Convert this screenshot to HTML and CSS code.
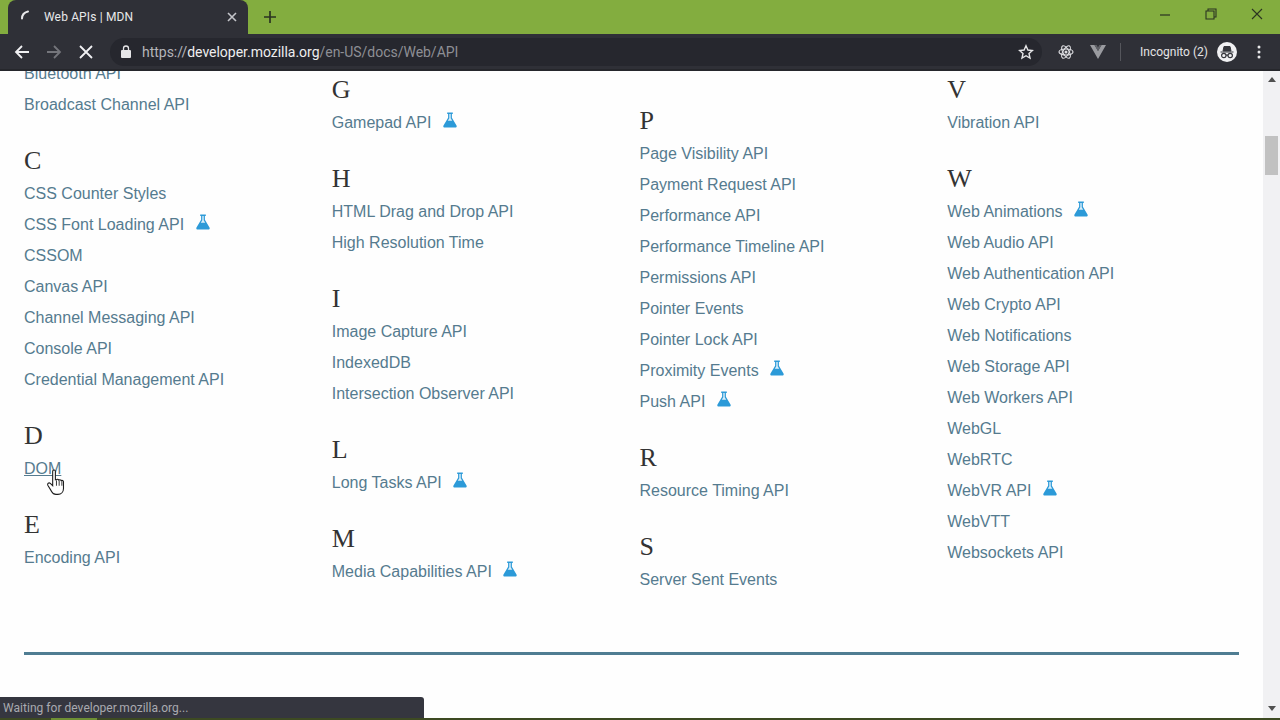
FILE: index.html
```html
<!DOCTYPE html>
<html lang="en">
<head>
    <meta charset="UTF-8">
    <meta name="viewport" content="width=device-width, initial-scale=1.0">
    <title>Web APIs | MDN</title>
    <link rel="stylesheet" href="styles.css">
</head>
<body>
    <svg class="defs" width="0" height="0">
        <symbol id="flask" viewBox="0 0 14 16">
            <path d="M4.200 0.500h5.600v1.400h-0.900v3.900l4.600 7.600c0.600 1 0 2.100-1.100 2.100H1.600c-1.100 0-1.700-1.100-1.100-2.100l4.600-7.600V1.900H4.200z" fill="#2c9ad8"/>
            <path d="M6.300 2h1.400v4.200l1.500 2.600H4.800l1.500-2.600z" fill="#d9eef9"/>
        </symbol>
    </svg>

    <div class="tabbar">
        <div class="tab">
            <svg class="spinner" width="16" height="16" viewBox="0 0 16 16"><path d="M3 9.500C3 6 5 3.500 9 2.500" fill="none" stroke="#e8e8ea" stroke-width="2" stroke-linecap="round"/></svg>
            <span class="tab-title">Web APIs | MDN</span>
            <svg class="tab-close" width="10" height="10" viewBox="0 0 10 10"><path d="M1 1l8 8M9 1l-8 8" stroke="#c4c5ca" stroke-width="1.600"/></svg>
        </div>
        <svg class="new-tab" width="14" height="14" viewBox="0 0 14 14"><path d="M7 1v12M1 7h12" stroke="#2b3322" stroke-width="1.700"/></svg>
        <div class="window-btns">
            <svg width="12" height="12" viewBox="0 0 12 12"><path d="M1 7h10" stroke="#2b3322" stroke-width="1.200"/></svg>
            <svg width="12" height="12" viewBox="0 0 12 12"><path d="M3 3V1h8v8H9M1 3h8v8H1z" fill="none" stroke="#2b3322" stroke-width="1.100"/></svg>
            <svg width="12" height="12" viewBox="0 0 12 12"><path d="M1 1l10 10M11 1L1 11" stroke="#2b3322" stroke-width="1.100"/></svg>
        </div>
    </div>

    <div class="toolbar">
        <svg class="nav-icon" width="16" height="16" viewBox="0 0 16 16"><path d="M15 8H2M8 2L2 8l6 6" fill="none" stroke="#f1f1f3" stroke-width="1.800"/></svg>
        <svg class="nav-icon" width="16" height="16" viewBox="0 0 16 16"><path d="M1 8h13M8 2l6 6-6 6" fill="none" stroke="#74757b" stroke-width="1.800"/></svg>
        <svg class="nav-icon" width="16" height="16" viewBox="0 0 16 16"><path d="M2 2l12 12M14 2L2 14" fill="none" stroke="#f1f1f3" stroke-width="1.800"/></svg>
        <div class="omnibox">
            <svg class="lock" width="10" height="13" viewBox="0 0 10 13"><path d="M2.500 5V3.500a2.500 2.500 0 0 1 5 0V5" fill="none" stroke="#e6e6e8" stroke-width="1.300"/><rect y="5" width="10" height="8" rx="1" fill="#e6e6e8"/></svg>
            <span class="url"><span class="url-scheme">https://</span><span class="url-host">developer.mozilla.org</span><span class="url-path">/en-US/docs/Web/API</span></span>
            <svg class="star" width="16" height="16" viewBox="0 0 16 16"><path d="M8 1.800l1.900 4.200 4.500.5-3.400 3 1 4.500L8 11.700 4 14l1-4.500-3.400-3 4.500-.5z" fill="none" stroke="#e6e6e8" stroke-width="1.400"/></svg>
        </div>
        <svg class="ext-react" width="16" height="16" viewBox="0 0 16 16"><g fill="none" stroke="#dcdce0" stroke-width="1.200"><ellipse cx="8" cy="8" rx="7" ry="3"/><ellipse cx="8" cy="8" rx="7" ry="3" transform="rotate(60 8 8)"/><ellipse cx="8" cy="8" rx="7" ry="3" transform="rotate(120 8 8)"/></g><circle cx="8" cy="8" r="1.500" fill="#dcdce0"/></svg>
        <svg class="ext-vue" width="16" height="14" viewBox="0 0 16 14"><path d="M0 0h4.500L8 6l3.500-6H16L8 14z" fill="#9a9ba0"/><path d="M4.500 0h2.200L8 2.400 9.300 0h2.200L8 6z" fill="#5f6066"/></svg>
        <div class="toolbar-sep"></div>
        <span class="incognito-label">Incognito (2)</span>
        <svg class="incognito-icon" width="20" height="20" viewBox="0 0 20 20"><circle cx="10" cy="10" r="10" fill="#f1f1f3"/><path d="M3.500 10h13M6 9l1-4.500h6L14 9z" fill="#35363c" stroke="#35363c"/><g fill="none" stroke="#35363c" stroke-width="1.200"><circle cx="6.800" cy="13.500" r="2.200"/><circle cx="13.200" cy="13.500" r="2.200"/><path d="M9 13.200h2"/></g></svg>
        <svg class="menu-dots" width="4" height="14" viewBox="0 0 4 14"><g fill="#e8e8ea"><circle cx="2" cy="2" r="1.500"/><circle cx="2" cy="7" r="1.500"/><circle cx="2" cy="12" r="1.500"/></g></svg>
    </div>

    <div class="viewport">
        <main class="page">
            <div class="api-index">
                <div class="col col-1">
                    <ul>
                        <li><a href="#">Bluetooth API</a></li>
                        <li><a href="#">Broadcast Channel API</a></li>
                    </ul>
                    <h2>C</h2>
                    <ul>
                        <li><a href="#">CSS Counter Styles</a></li>
                        <li><a href="#">CSS Font Loading API</a><svg class="flask"><use href="#flask"/></svg></li>
                        <li><a href="#">CSSOM</a></li>
                        <li><a href="#">Canvas API</a></li>
                        <li><a href="#">Channel Messaging API</a></li>
                        <li><a href="#">Console API</a></li>
                        <li><a href="#">Credential Management API</a></li>
                    </ul>
                    <h2>D</h2>
                    <ul>
                        <li><a href="#" class="hover">DOM</a></li>
                    </ul>
                    <h2>E</h2>
                    <ul>
                        <li><a href="#">Encoding API</a></li>
                    </ul>
                </div>
                <div class="col col-2">
                    <h2>G</h2>
                    <ul>
                        <li><a href="#">Gamepad API</a><svg class="flask"><use href="#flask"/></svg></li>
                    </ul>
                    <h2>H</h2>
                    <ul>
                        <li><a href="#">HTML Drag and Drop API</a></li>
                        <li><a href="#">High Resolution Time</a></li>
                    </ul>
                    <h2>I</h2>
                    <ul>
                        <li><a href="#">Image Capture API</a></li>
                        <li><a href="#">IndexedDB</a></li>
                        <li><a href="#">Intersection Observer API</a></li>
                    </ul>
                    <h2>L</h2>
                    <ul>
                        <li><a href="#">Long Tasks API</a><svg class="flask"><use href="#flask"/></svg></li>
                    </ul>
                    <h2>M</h2>
                    <ul>
                        <li><a href="#">Media Capabilities API</a><svg class="flask"><use href="#flask"/></svg></li>
                    </ul>
                </div>
                <div class="col col-3">
                    <h2>P</h2>
                    <ul>
                        <li><a href="#">Page Visibility API</a></li>
                        <li><a href="#">Payment Request API</a></li>
                        <li><a href="#">Performance API</a></li>
                        <li><a href="#">Performance Timeline API</a></li>
                        <li><a href="#">Permissions API</a></li>
                        <li><a href="#">Pointer Events</a></li>
                        <li><a href="#">Pointer Lock API</a></li>
                        <li><a href="#">Proximity Events</a><svg class="flask"><use href="#flask"/></svg></li>
                        <li><a href="#">Push API</a><svg class="flask"><use href="#flask"/></svg></li>
                    </ul>
                    <h2>R</h2>
                    <ul>
                        <li><a href="#">Resource Timing API</a></li>
                    </ul>
                    <h2>S</h2>
                    <ul>
                        <li><a href="#">Server Sent Events</a></li>
                    </ul>
                </div>
                <div class="col col-4">
                    <h2>V</h2>
                    <ul>
                        <li><a href="#">Vibration API</a></li>
                    </ul>
                    <h2>W</h2>
                    <ul>
                        <li><a href="#">Web Animations</a><svg class="flask"><use href="#flask"/></svg></li>
                        <li><a href="#">Web Audio API</a></li>
                        <li><a href="#">Web Authentication API</a></li>
                        <li><a href="#">Web Crypto API</a></li>
                        <li><a href="#">Web Notifications</a></li>
                        <li><a href="#">Web Storage API</a></li>
                        <li><a href="#">Web Workers API</a></li>
                        <li><a href="#">WebGL</a></li>
                        <li><a href="#">WebRTC</a></li>
                        <li><a href="#">WebVR API</a><svg class="flask"><use href="#flask"/></svg></li>
                        <li><a href="#">WebVTT</a></li>
                        <li><a href="#">Websockets API</a></li>
                    </ul>
                </div>
            </div>
            <hr class="page-rule">
        </main>
        <div class="scrollbar">
            <span class="arrow-up"></span>
            <div class="thumb"></div>
            <span class="arrow-down"></span>
        </div>
        <svg class="cursor" width="22" height="27" viewBox="0 0 20 25"><path d="M6 2c0-1.500 2.500-1.500 2.500 0v8l1-.3c.8-.3 1.800 0 2 .5.800-.5 2-.3 2.300.5.800-.4 2.200 0 2.200 1.200v6.100c0 3-2 5.500-5.200 5.500H9c-2 0-3.200-1.200-4.200-3L1.500 15c-.8-1.500 1-2.800 2.300-1.600L6 15.500z" fill="#fff" stroke="#1c1c1c" stroke-width="1"/><path d="M9.500 10.500v5M12 10.500v5M14.500 11v4.500" stroke="#1c1c1c" stroke-width="0.800"/></svg>
        <div class="status-bubble">Waiting for developer.mozilla.org...</div>
    </div>
    <div class="taskbar-edge"><span class="taskbar-active"></span></div>
</body>
</html>
```

FILE: styles.css
```css
html, body {
    margin: 0;
    height: 720px;
    overflow: hidden;
}
body {
    display: flex;
    flex-direction: column;
    font-family: "Liberation Sans", Arial, sans-serif;
    background: #fefefe;
}
.defs {
    position: absolute;
}

/* browser chrome */
.tabbar {
    height: 34px;
    flex: none;
    display: flex;
    align-items: flex-end;
    padding-left: 8px;
    background: #83ad3f;
}
.tab {
    width: 240px;
    height: 34px;
    box-sizing: border-box;
    display: flex;
    align-items: center;
    padding: 0 11px;
    background: #2f3037;
    border-radius: 8px 8px 0 0;
}
.tab-title {
    margin-left: 9px;
    flex: 1;
    font: 12px Roboto, sans-serif;
    letter-spacing: 0.15px;
    color: #e8e8ea;
}
.new-tab {
    margin: 0 0 10px 15px;
}
.window-btns {
    margin-left: auto;
    height: 28px;
    display: flex;
    align-items: center;
    gap: 34px;
    padding-right: 17px;
    margin-bottom: 6px;
}
.toolbar {
    height: 37px;
    flex: none;
    display: flex;
    align-items: center;
    box-sizing: border-box;
    padding-left: 14px;
    background: #2f3037;
    border-bottom: 2px solid #26272c;
}
.nav-icon {
    margin-right: 16px;
}
.omnibox {
    width: 932px;
    height: 28px;
    display: flex;
    align-items: center;
    box-sizing: border-box;
    padding: 0 8px 0 11px;
    background: #26272e;
    border-radius: 14px;
}
.lock {
    flex: none;
}
.url {
    margin-left: 11px;
    flex: 1;
    font: 14px Roboto, sans-serif;
    letter-spacing: -0.02px;
    white-space: nowrap;
}
.url-scheme {
    color: #b5b5ba;
}
.url-host {
    color: #eeeeef;
}
.url-path {
    color: #8e8f95;
}
.ext-react {
    margin-left: 16px;
}
.ext-vue {
    margin-left: 16px;
}
.toolbar-sep {
    width: 1px;
    height: 18px;
    margin-left: 14px;
    background: #55565c;
}
.incognito-label {
    margin-left: 19px;
    font: 12px Roboto, sans-serif;
    color: #e4e4e6;
    white-space: nowrap;
}
.incognito-icon {
    margin-left: 9px;
}
.menu-dots {
    margin-left: 20px;
}

/* page */
.viewport {
    flex: 1;
    min-height: 0;
    position: relative;
    display: flex;
    overflow: hidden;
}
.page {
    flex: 1;
    min-width: 0;
    margin-top: -22px;
    padding: 0 24px;
}
.api-index {
    display: grid;
    grid-template-columns: repeat(4, 1fr);
    column-gap: 16px;
}
.col-1 {
    padding-top: 9px;
}
.col-3 {
    padding-top: 31px;
}
h2 {
    margin: 0;
    padding-top: 24px;
    font: normal 26px/34px "Liberation Serif", serif;
    color: #333;
}
ul {
    list-style: none;
    margin: 0;
    padding: 0;
}
li {
    height: 31px;
    line-height: 31px;
    font-size: 16px;
    white-space: nowrap;
}
li a {
    color: #557b8f;
    text-decoration: none;
}
li a.hover {
    text-decoration: underline;
}
.flask {
    width: 14px;
    height: 16px;
    margin-left: 11.500px;
}
.page-rule {
    margin: 57px 0 0 0;
    border: none;
    height: 3px;
    background: #4f7d92;
}
.scrollbar {
    width: 17px;
    flex: none;
    box-sizing: border-box;
    display: flex;
    flex-direction: column;
    align-items: center;
    padding-top: 6px;
    background: #f1f1f3;
}
.arrow-up {
    border: 4px solid transparent;
    border-top: none;
    border-bottom: 5px solid #505050;
}
.thumb {
    width: 13px;
    height: 39px;
    margin-top: 54px;
    background: #c1c1c1;
}
.arrow-down {
    margin-top: auto;
    margin-bottom: 7px;
    border: 4px solid transparent;
    border-bottom: none;
    border-top: 5px solid #505050;
}
.cursor {
    position: absolute;
    left: 46px;
    top: 398px;
}
.status-bubble {
    position: absolute;
    left: 0;
    bottom: 0;
    width: 424px;
    height: 21px;
    box-sizing: border-box;
    padding: 4px 0 0 3px;
    background: #35363f;
    border-top-right-radius: 3px;
    font: 12px/15px Roboto, sans-serif;
    letter-spacing: 0.03px;
    color: #a9aab0;
}
.taskbar-edge {
    height: 2px;
    flex: none;
    padding-left: 51px;
    background: #3d4a22;
}
.taskbar-active {
    display: block;
    width: 46px;
    height: 2px;
    background: #6e8f34;
}
```
